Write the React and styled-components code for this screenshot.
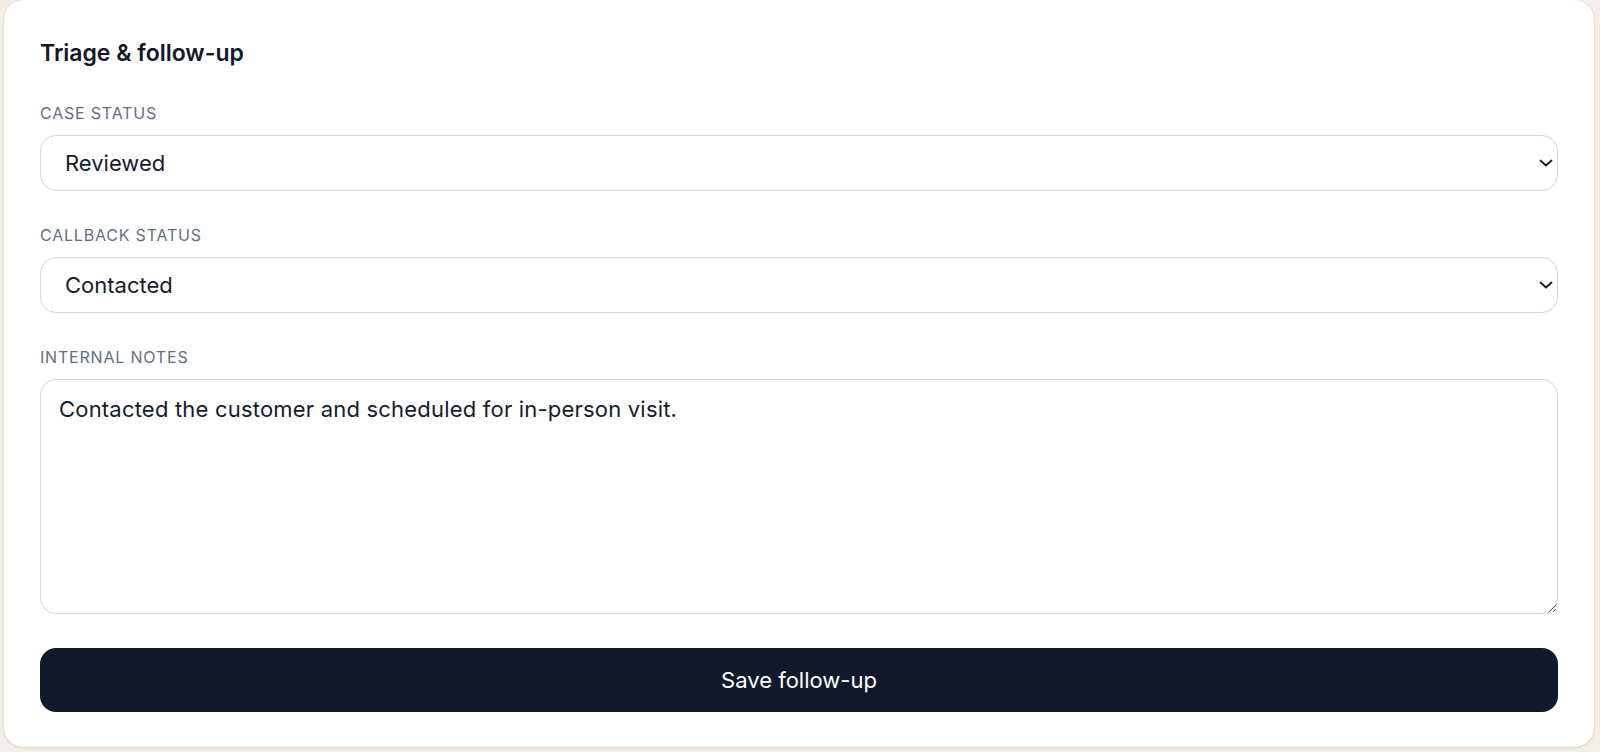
import styled, { createGlobalStyle } from 'styled-components';

const GlobalStyle = createGlobalStyle`
  html, body {
    margin: 0;
    padding: 0;
    background: #f3efe7;
  }
  body {
    font-family: Inter, "Noto Sans", "Liberation Sans", sans-serif;
    color: #111827;
  }
  * { box-sizing: border-box; }
`

const Page = styled.div`
  padding: 0 6px 5px 4px;
`

const Card = styled.section`
  background: #ffffff;
  border-radius: 20px;
  box-shadow: 0 1px 3px rgba(60, 50, 30, 0.12), 0 0 0 1px rgba(60, 50, 30, 0.04);
  padding: 36px 36px 35px;
`

const Title = styled.h2`
  margin: 0 0 33px;
  font-size: 23px;
  line-height: 34px;
  font-weight: 600;
  color: #111827;
`

const Form = styled.form`
  display: flex;
  flex-direction: column;
  gap: 34px;
`

const Field = styled.div`
  display: flex;
  flex-direction: column;
  gap: 12px;
`

const Label = styled.label`
  font-size: 16px;
  line-height: 20px;
  letter-spacing: 0.05em;
  text-transform: uppercase;
  color: #5f6f88;
`

const SelectWrap = styled.div`
  position: relative;
`

const Select = styled.select`
  appearance: none;
  -webkit-appearance: none;
  width: 100%;
  height: 56px;
  padding: 0 40px 0 24px;
  font-family: inherit;
  font-size: 22px;
  color: #141c2e;
  background: #ffffff;
  border: 1.5px solid #d6d4d0;
  border-radius: 16px;
  outline: none;
`

const Chevron = styled.svg`
  position: absolute;
  right: 5px;
  top: 50%;
  transform: translateY(-50%);
  pointer-events: none;
`

const TextArea = styled.textarea`
  width: 100%;
  height: 235px;
  padding: 13px 18px;
  font-family: inherit;
  font-size: 22px;
  line-height: 33px;
  letter-spacing: 0.2px;
  color: #141c2e;
  background: #ffffff;
  border: 1.5px solid #d6d4d0;
  border-radius: 16px;
  outline: none;
  resize: vertical;
  display: block;
`

const SaveButton = styled.button`
  height: 64px;
  width: 100%;
  border: none;
  border-radius: 16px;
  background: #111a2c;
  color: #ffffff;
  font-family: inherit;
  font-size: 22px;
  cursor: pointer;
`

const StatusSelect = ({ id, value, options }) => (
  <SelectWrap>
    <Select id={id} defaultValue={value}>
      {options.map((o) => (
        <option key={o} value={o}>{o}</option>
      ))}
    </Select>
    <Chevron width="14" height="8" viewBox="0 0 14 8" fill="none">
      <path d="M1.5 1.5 L7 6.5 L12.5 1.5" stroke="#111827" strokeWidth="1.8" strokeLinecap="round" strokeLinejoin="round" />
    </Chevron>
  </SelectWrap>
)

const App = () => {
  return (
    <>
      <GlobalStyle />
      <Page>
        <Card>
          <Title>Triage &amp; follow-up</Title>
          <Form onSubmit={(e) => e.preventDefault()}>
            <Field>
              <Label htmlFor="case-status">Case status</Label>
              <StatusSelect
                id="case-status"
                value="Reviewed"
                options={['New', 'Reviewed', 'Escalated', 'Closed']}
              />
            </Field>
            <Field>
              <Label htmlFor="callback-status">Callback status</Label>
              <StatusSelect
                id="callback-status"
                value="Contacted"
                options={['Pending', 'Contacted', 'No answer', 'Not needed']}
              />
            </Field>
            <Field>
              <Label htmlFor="notes">Internal notes</Label>
              <TextArea
                id="notes"
                defaultValue="Contacted the customer and scheduled for in-person visit."
              />
            </Field>
            <SaveButton type="submit">Save follow-up</SaveButton>
          </Form>
        </Card>
      </Page>
    </>
  );
}

export default App;
